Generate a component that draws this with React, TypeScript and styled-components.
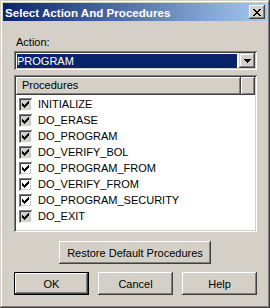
import styled, { createGlobalStyle } from "styled-components";

const GlobalStyle = createGlobalStyle`
  html, body {
    margin: 0;
    padding: 0;
    background: #d4d0c8;
  }
  body {
    font-family: "Liberation Sans", Arial, sans-serif;
    font-size: 11px;
    color: #000;
  }
`;

const Window = styled.div`
  width: 270px;
  height: 308px;
  box-sizing: border-box;
  padding: 3px;
  background: #d4d0c8;
  box-shadow: inset -1px -1px #404040, inset 1px 1px #d4d0c8,
    inset -2px -2px #808080, inset 2px 2px #ffffff;
  display: flex;
  flex-direction: column;
`;

const TitleBar = styled.div`
  height: 18px;
  display: flex;
  align-items: center;
  justify-content: space-between;
  padding: 0 2px 0 2px;
  background: linear-gradient(to right, #0a246a, #a6caf0);
`;

const Title = styled.span`
  color: #fff;
  font-weight: bold;
  font-size: 11.6px;
  white-space: nowrap;
`;

const CloseButton = styled.div`
  width: 16px;
  height: 14px;
  background: #d4d0c8;
  box-shadow: inset -1px -1px #404040, inset 1px 1px #ffffff,
    inset -2px -2px #808080, inset 2px 2px #d4d0c8;
  display: flex;
  align-items: center;
  justify-content: center;
`;

const Body = styled.div`
  display: flex;
  flex-direction: column;
  padding: 15px 10px 0 11px;
`;

const Label = styled.div`
  line-height: 13px;
  padding-left: 2px;
`;

const Sunken = styled.div`
  background: #fff;
  box-shadow: inset 1px 1px #808080, inset -1px -1px #ffffff,
    inset 2px 2px #404040, inset -2px -2px #d4d0c8;
  padding: 2px;
  box-sizing: border-box;
`;

const Combo = styled(Sunken)`
  margin-top: 2px;
  height: 19px;
  display: flex;
  align-items: stretch;
`;

const ComboValue = styled.div`
  flex: 1;
  margin: 1px 2px 0 1px;
  background: #0a246a;
  color: #fff;
  line-height: 14px;
`;

const DropButton = styled.div`
  width: 16px;
  background: #d4d0c8;
  box-shadow: inset -1px -1px #404040, inset 1px 1px #d4d0c8,
    inset -2px -2px #808080, inset 2px 2px #ffffff;
  display: flex;
  align-items: center;
  justify-content: center;
`;

const List = styled(Sunken)`
  margin-top: 5px;
  height: 157px;
  display: flex;
  flex-direction: column;
`;

const Header = styled.div`
  display: flex;
  height: 18px;
  margin-bottom: 1px;
`;

const HeaderCell = styled.div<{ $grow?: boolean }>`
  ${(p) => (p.$grow ? "flex: 1;" : "width: 14px;")}
  background: #d4d0c8;
  box-shadow: inset -1px -1px #404040, inset 1px 1px #ffffff,
    inset -2px -2px #808080;
  line-height: 17px;
  padding-left: 6px;
  box-sizing: border-box;
`;

const Row = styled.div`
  display: flex;
  align-items: center;
  height: 16px;
  padding-left: 3px;
  gap: 6px;
`;

const CheckBox = styled.div<{ $gray?: boolean }>`
  width: 13px;
  height: 13px;
  box-sizing: border-box;
  background: ${(p) => (p.$gray ? "#d4d0c8" : "#ffffff")};
  box-shadow: inset 1px 1px #808080, inset -1px -1px #ffffff,
    inset 2px 2px #404040, inset -2px -2px #d4d0c8;
  display: flex;
  align-items: center;
  justify-content: center;
`;

const Button = styled.div<{ $default?: boolean; $w: number; $h: number }>`
  width: ${(p) => p.$w}px;
  height: ${(p) => p.$h}px;
  box-sizing: border-box;
  background: #d4d0c8;
  display: flex;
  align-items: center;
  justify-content: center;
  box-shadow: inset -1px -1px #404040, inset 1px 1px #ffffff,
    inset -2px -2px #808080, inset 2px 2px #d4d0c8;
  ${(p) => (p.$default ? "border: 1px solid #000;" : "")}
`;

const RestoreRow = styled.div`
  display: flex;
  justify-content: center;
  margin-top: 9px;
  padding-right: 1px;
`;

const ButtonRow = styled.div`
  display: flex;
  gap: 9px;
  margin-top: 8px;
`;

const Check = () => (
  <svg width="7" height="7" viewBox="0 0 7 7" shapeRendering="crispEdges">
    <path
      d="M6 0h1v1h-1z M5 1h2v1h-2z M0 2h1v1h-1z M4 2h3v1h-3z M0 3h2v1h-2z M3 3h3v1h-3z M0 4h5v1h-5z M1 5h3v1h-3z M2 6h1v1h-1z"
      fill="#000"
    />
  </svg>
);

const items: { name: string; gray: boolean }[] = [
  { name: "INITIALIZE", gray: true },
  { name: "DO_ERASE", gray: true },
  { name: "DO_PROGRAM", gray: true },
  { name: "DO_VERIFY_BOL", gray: true },
  { name: "DO_PROGRAM_FROM", gray: false },
  { name: "DO_VERIFY_FROM", gray: false },
  { name: "DO_PROGRAM_SECURITY", gray: false },
  { name: "DO_EXIT", gray: true },
];

function App() {
  return (
    <>
      <GlobalStyle />
      <Window>
        <TitleBar>
          <Title>Select Action And Procedures</Title>
          <CloseButton>
            <svg width="8" height="7" viewBox="0 0 8 7" shapeRendering="crispEdges">
              <path
                d="M0 0h2v1h-2z M6 0h2v1h-2z M1 1h2v1h-2z M5 1h2v1h-2z M2 2h4v1h-4z M3 3h2v1h-2z M2 4h4v1h-4z M1 5h2v1h-2z M5 5h2v1h-2z M0 6h2v1h-2z M6 6h2v1h-2z"
                fill="#000"
              />
            </svg>
          </CloseButton>
        </TitleBar>
        <Body>
          <Label>Action:</Label>
          <Combo>
            <ComboValue>PROGRAM</ComboValue>
            <DropButton>
              <svg width="7" height="4" viewBox="0 0 7 4" shapeRendering="crispEdges">
                <path d="M0 0h7v1h-7z M1 1h5v1h-5z M2 2h3v1h-3z M3 3h1v1h-1z" fill="#000" />
              </svg>
            </DropButton>
          </Combo>
          <List>
            <Header>
              <HeaderCell $grow>Procedures</HeaderCell>
              <HeaderCell />
            </Header>
            {items.map((it) => (
              <Row key={it.name}>
                <CheckBox $gray={it.gray}>
                  <Check />
                </CheckBox>
                {it.name}
              </Row>
            ))}
          </List>
          <RestoreRow>
            <Button $w={152} $h={23}>
              Restore Default Procedures
            </Button>
          </RestoreRow>
          <ButtonRow>
            <Button $default $w={75} $h={23}>
              OK
            </Button>
            <Button $w={75} $h={23}>
              Cancel
            </Button>
            <Button $w={75} $h={23}>
              Help
            </Button>
          </ButtonRow>
        </Body>
      </Window>
    </>
  );
}

export default App;
